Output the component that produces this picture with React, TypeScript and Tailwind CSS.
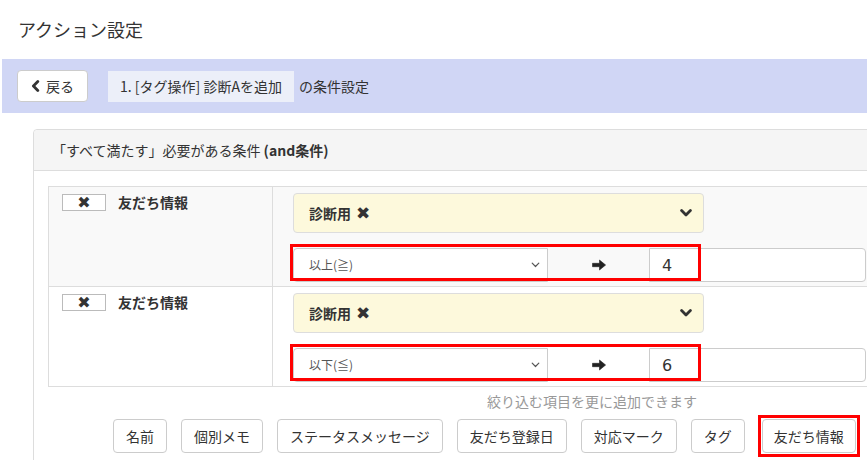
import React from "react";

const ChevronDown: React.FC<{ className?: string; w?: number; sw?: number }> = ({ className, w = 12, sw = 2.8 }) => (
  <svg width={w} height={(w * 2) / 3} viewBox="0 0 12 8" className={className}>
    <path d="M1.6 1.6 L6 6 L10.4 1.6" fill="none" stroke="currentColor" strokeWidth={sw} strokeLinecap="round" strokeLinejoin="round" />
  </svg>
);

const ChevronLeft: React.FC = () => (
  <svg width="9" height="12" viewBox="0 0 9 12">
    <path d="M6.8 1.6 L2.4 6 L6.8 10.4" fill="none" stroke="currentColor" strokeWidth="2.8" strokeLinecap="round" strokeLinejoin="round" />
  </svg>
);

const ArrowRight: React.FC = () => (
  <svg width="14" height="12" viewBox="0 0 14 12">
    <path d="M0.5 4.3h7V1L13.6 6L7.5 11V7.7h-7z" fill="#222" stroke="#222" strokeWidth="0.6" strokeLinejoin="round" />
  </svg>
);

type Cond = { op: string; value: string; striped: boolean };

const conditions: Cond[] = [
  { op: "以上(≧)", value: "4", striped: true },
  { op: "以下(≦)", value: "6", striped: false },
];

const addButtons = ["名前", "個別メモ", "ステータスメッセージ", "友だち登録日", "対応マーク", "タグ"];

const ConditionRow: React.FC<{ c: Cond }> = ({ c }) => (
  <div className={`flex h-[100px] border-b border-[#ddd] ${c.striped ? "bg-[#f9f9f9]" : "bg-white"}`}>
    {/* left cell */}
    <div className="w-[224px] border-r border-[#ddd] flex items-start pt-[7px] pl-[13px]">
      <button className="w-[44px] h-[17px] bg-white border border-[#bbb] flex items-center justify-center text-[16px] leading-none text-[#333] font-[family-name:'DejaVu_Sans',sans-serif]">
        ✖
      </button>
      <span className="ml-[12px] text-[14px] leading-[17px] font-bold text-[#333]">友だち情報</span>
    </div>

    {/* right cell */}
    <div className="relative flex-1 pl-[20px] pt-[6px]">
      <div className="w-[411px] h-[40px] bg-[#fdf9dc] border border-[#ddd] rounded-[4px] flex items-center justify-between pl-[15px] pr-[11px]">
        <span className="text-[14px] font-bold text-[#333] flex items-center gap-[5px]">
          診断用
          <span className="text-[17px] leading-none font-[family-name:'DejaVu_Sans',sans-serif]">✖</span>
        </span>
        <ChevronDown className="text-[#333]" />
      </div>

      <div className="mt-[15px] h-[34px] flex">
        <div className="w-[255px] h-full bg-white border border-[#ccc] rounded-l-[4px] flex items-center justify-between pl-[15px] pr-[7px]">
          <span className="text-[12px] text-[#555]">{c.op}</span>
          <ChevronDown className="text-[#555]" w={9} sw={1.6} />
        </div>
        <div className="w-[101px] h-full flex items-center justify-center">
          <ArrowRight />
        </div>
        <div className="w-[217px] h-full bg-white border border-[#ccc] rounded-r-[4px] flex items-center pl-[12px]">
          <span className="text-[16px] text-[#333] font-[family-name:'DejaVu_Sans',sans-serif] mt-[2px]">{c.value}</span>
        </div>
      </div>

      {/* annotation box */}
      <div className="absolute left-[17px] top-[57px] w-[411px] h-[37px] border-[3px] border-[#ff0000] pointer-events-none" />
    </div>
  </div>
);

const App: React.FC = () => {
  return (
    <div className="w-[867px] h-[460px] overflow-hidden bg-white text-[#333] font-[family-name:'Noto_Sans_CJK_JP','Liberation_Sans',sans-serif]">
      <h1 className="h-[59px] pl-[18px] pt-[16px] text-[18px] leading-[26px] font-normal text-[#333]">アクション設定</h1>

      {/* band */}
      <div className="ml-[2px] h-[54px] bg-[#d0d6f5] flex items-center pl-[15px]">
        <button className="w-[71px] h-[32px] bg-white border border-[#ccc] rounded-[4px] flex items-center justify-center gap-[6px] text-[14px] text-[#333]">
          <ChevronLeft />
          <span>戻る</span>
        </button>
        <div className="ml-[20px] h-[31px] px-[12px] bg-[#eceff9] flex items-center text-[14px] text-[#333]">
          1. [タグ操作] 診断Aを追加
        </div>
        <span className="ml-[5px] text-[14px] text-[#333]">の条件設定</span>
      </div>

      {/* panel */}
      <div className="mt-[16px] ml-[33px] w-[860px] h-[400px] border border-[#ddd] rounded-t-[4px]">
        <div className="h-[41px] bg-[#f5f5f5] border-b border-[#ddd] rounded-t-[4px] flex items-center pl-[18px] text-[14px] text-[#333]">
          「すべて満たす」必要がある条件&nbsp;<b>(and条件)</b>
        </div>

        <div className="pt-[15px] pl-[14px]">
          <div className="w-[830px] border-t border-l border-[#ddd]">
            {conditions.map((c, i) => (
              <ConditionRow key={i} c={c} />
            ))}
          </div>

          <p className="mt-[4px] pl-[439px] text-[14px] leading-[20px] text-[#999]">絞り込む項目を更に追加できます</p>

          <div className="mt-[8px] pl-[65px] flex items-center gap-[14px]">
            {addButtons.map((b) => (
              <button
                key={b}
                className="h-[34px] px-[12px] bg-white border border-[#ccc] rounded-[4px] text-[14px] text-[#333]"
              >
                {b}
              </button>
            ))}
            <div className="relative ml-[3px]">
              <button className="h-[34px] px-[11px] bg-white border border-[#ccc] rounded-[4px] text-[14px] text-[#333]">
                友だち情報
              </button>
              <div className="absolute -inset-[4px] border-[3px] border-[#ff0000] pointer-events-none" />
            </div>
          </div>
        </div>
      </div>
    </div>
  );
};

export default App;
